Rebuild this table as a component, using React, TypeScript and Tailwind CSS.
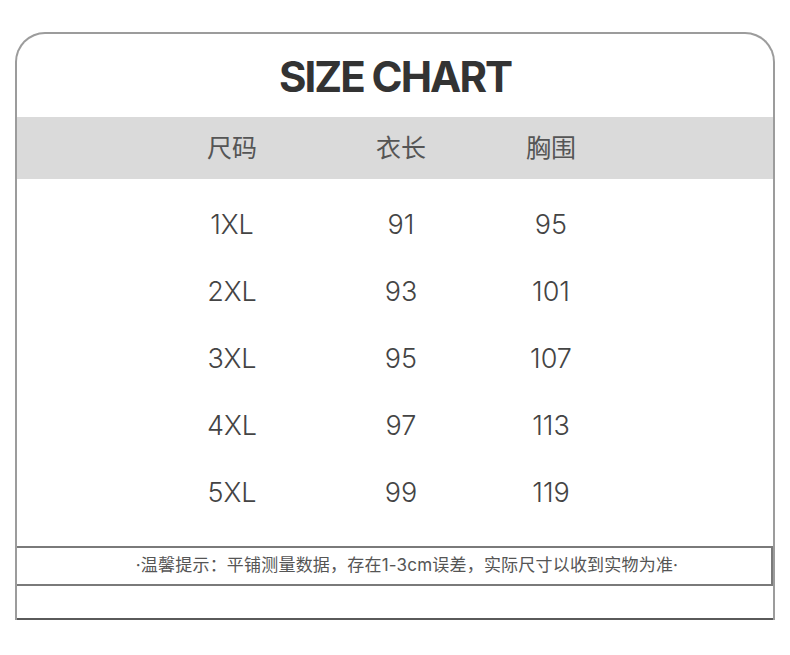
import * as React from 'react';

const ROWS = [
  { size: '1XL', length: '91', chest: '95' },
  { size: '2XL', length: '93', chest: '101' },
  { size: '3XL', length: '95', chest: '107' },
  { size: '4XL', length: '97', chest: '113' },
  { size: '5XL', length: '99', chest: '119' },
];

const FONT = { fontFamily: 'Inter, "Noto Sans CJK SC", sans-serif' };

const Cells = ({ cells, className }: { cells: string[]; className: string }) => (
  <div className={`flex items-center ${className}`}>
    <div className="ml-[155px] w-[120px] text-center">{cells[0]}</div>
    <div className="ml-[49px] w-[120px] text-center">{cells[1]}</div>
    <div className="ml-[30px] w-[120px] text-center">{cells[2]}</div>
  </div>
);

export default function App() {
  return (
    <div className="h-[655px] w-[790px] bg-white pt-[32px] pl-[15px]" style={FONT}>
      <div className="w-[760px] rounded-t-[30px] border-x-2 border-t-2 border-[#9c9c9c]">
        {/* Title */}
        <div className="flex h-[83px] items-center justify-center pt-[2px]">
          <h1 className="text-[42px] font-bold leading-none tracking-[-2px] text-[#333333]">SIZE CHART</h1>
        </div>

        {/* Header band */}
        <Cells
          cells={['尺码', '衣长', '胸围']}
          className="h-[62px] bg-[#dadada] pt-[2px] text-[25px] text-[#555555]"
        />

        {/* Data rows */}
        <div className="pt-[13px] pb-[19px]">
          {ROWS.map((r) => (
            <Cells
              key={r.size}
              cells={[r.size, r.length, r.chest]}
              className="h-[67px] text-[27px] font-light text-[#444444]"
            />
          ))}
        </div>

        {/* Note */}
        <div className="flex h-[40px] items-center justify-center border-y-2 border-r-2 border-[#7a7a7a] pl-[26px] text-[17px] tracking-[0.2px] text-[#555555]">
          ·温馨提示：平铺测量数据，存在1-3cm误差，实际尺寸以收到实物为准·
        </div>

        <div className="h-[34px] border-b-2 border-[#5a5a5a]" />
      </div>
    </div>
  );
}
